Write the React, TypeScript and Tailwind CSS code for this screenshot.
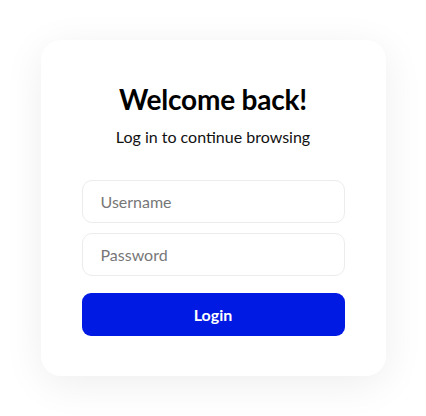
export default function App() {
  return (
    <div
      className="min-h-[416px] w-full bg-white flex justify-center pt-[40px]"
      style={{ fontFamily: "Lato, 'Open Sans', sans-serif" }}
    >
      <div className="w-[345px] h-[336px] bg-white rounded-[20px] shadow-[0_8px_40px_rgba(0,0,0,0.07)] flex flex-col items-center px-[41px] pt-[41px]">
        <h1 className="text-[28px] leading-[36px] font-bold text-black tracking-[-0.2px]">Welcome back!</h1>
        <p className="mt-[10px] text-[16px] leading-[20px] text-[#111]">Log in to continue browsing</p>
        <div className="mt-[33px] w-full flex flex-col gap-[10px]">
          <input
            placeholder="Username"
            className="w-full h-[43px] rounded-[10px] border border-[#ececec] px-[18px] text-[16px] text-black placeholder:text-[#777] outline-none"
          />
          <input
            type="password"
            placeholder="Password"
            className="w-full h-[43px] rounded-[10px] border border-[#ececec] px-[18px] text-[16px] text-black placeholder:text-[#777] outline-none"
          />
        </div>
        <button className="mt-[17px] w-full h-[43px] rounded-[9px] bg-[#0019e3] text-white text-[16px] font-bold">
          Login
        </button>
      </div>
    </div>
  );
}
